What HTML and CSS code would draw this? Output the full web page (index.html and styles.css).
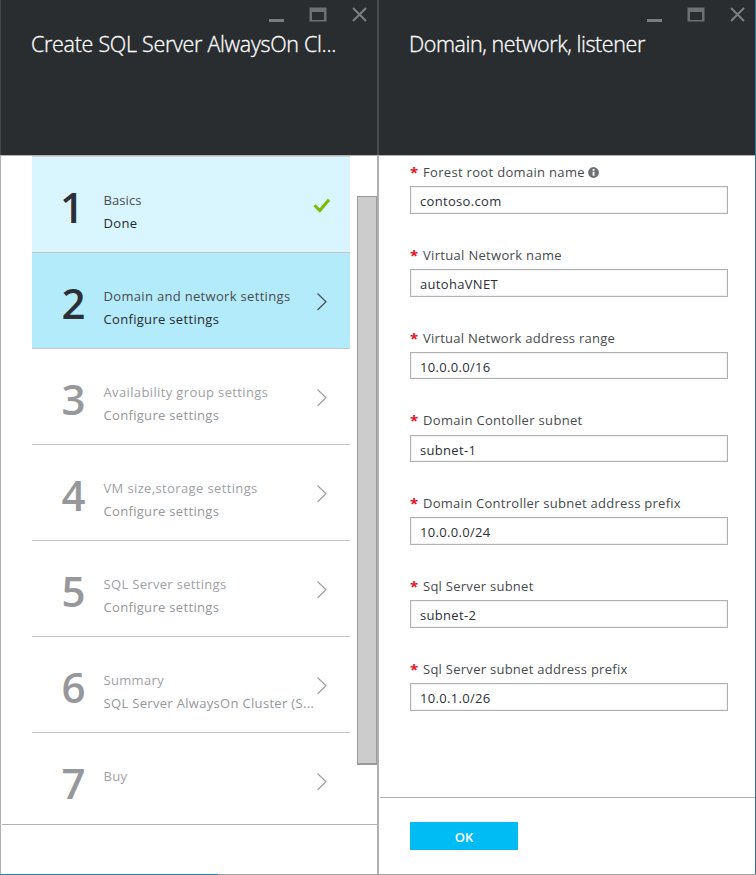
FILE: index.html
```html
<!DOCTYPE html>
<html lang="en">
<head>
<meta charset="utf-8">
<title>Create SQL Server AlwaysOn Cluster</title>
<link rel="stylesheet" href="styles.css">
</head>
<body>
<svg class="defs" width="0" height="0">
  <symbol id="controls" viewBox="0 0 100 16">
    <path d="M0 12h15v3H0z" fill="#7a7d80"/>
    <path d="M40.5 .5h17v14h-17z" fill="#6d7174"/>
    <path d="M43 5h12v8H43z" fill="#292d30"/>
    <path d="M84 1l13 13M97 1L84 14" stroke="#7d8083" stroke-width="2" fill="none"/>
  </symbol>
  <symbol id="chevron" viewBox="0 0 12 18">
    <path d="M1.5 .5L10 8.7 1.5 17" fill="none" stroke="currentColor" stroke-width="1.2"/>
  </symbol>
</svg>
<div class="portal">
  <section class="blade steps-blade">
    <header class="head">
      <svg class="controls"><use href="#controls"/></svg>
      <h1 class="t-create">Create SQL Server AlwaysOn Cl...</h1>
    </header>
    <div class="body">
      <ol class="steps">
        <li class="step done"><b>1</b><div class="text"><span class="t-basics">Basics</span><em>Done</em></div><svg class="check" viewBox="0 0 18 16"><path d="M1.5 7.2l5.3 5.3L16 1.7" fill="none" stroke="#7fba00" stroke-width="3"/></svg></li>
        <li class="step active"><b>2</b><div class="text"><span>Domain and network settings</span><em>Configure settings</em></div><svg class="chev"><use href="#chevron"/></svg></li>
        <li class="step"><b>3</b><div class="text"><span class="loose">Availability group settings</span><em>Configure settings</em></div><svg class="chev"><use href="#chevron"/></svg></li>
        <li class="step"><b>4</b><div class="text"><span class="loose">VM size,storage settings</span><em>Configure settings</em></div><svg class="chev"><use href="#chevron"/></svg></li>
        <li class="step"><b>5</b><div class="text"><span>SQL Server settings</span><em>Configure settings</em></div><svg class="chev"><use href="#chevron"/></svg></li>
        <li class="step"><b>6</b><div class="text"><span>Summary</span><em>SQL Server AlwaysOn Cluster (S...</em></div><svg class="chev"><use href="#chevron"/></svg></li>
        <li class="step"><b>7</b><div class="text"><span>Buy</span></div><svg class="chev"><use href="#chevron"/></svg></li>
      </ol>
      <div class="scrollbar"></div>
    </div>
    <footer class="foot"></footer>
    <div class="progress"></div>
  </section>
  <section class="blade form-blade">
    <header class="head">
      <svg class="controls"><use href="#controls"/></svg>
      <h1 class="t-domain">Domain, network, listener</h1>
    </header>
    <div class="body form">
      <div class="field"><label><i>*</i><span>Forest root domain name</span><svg class="info" viewBox="0 0 11 11"><circle cx="5.5" cy="5.5" r="5.4" fill="#6d7175"/><path d="M4.6 2h1.9v1.7H4.6zM4.6 4.7h1.9v4H4.6z" fill="#fff"/></svg></label><div class="input">contoso.com</div></div>
      <div class="field"><label><i>*</i><span>Virtual Network name</span></label><div class="input">autohaVNET</div></div>
      <div class="field"><label><i>*</i><span class="snug">Virtual Network address range</span></label><div class="input">10.0.0.0/16</div></div>
      <div class="field"><label><i>*</i><span>Domain Contoller subnet</span></label><div class="input">subnet-1</div></div>
      <div class="field"><label><i>*</i><span class="snug">Domain Controller subnet address prefix</span></label><div class="input">10.0.0.0/24</div></div>
      <div class="field"><label><i>*</i><span class="snug">Sql Server subnet</span></label><div class="input">subnet-2</div></div>
      <div class="field"><label><i>*</i><span class="snug">Sql Server subnet address prefix</span></label><div class="input">10.0.1.0/26</div></div>
    </div>
    <footer class="foot"><button>OK</button></footer>
    <div class="progress"></div>
  </section>
</div>
</body>
</html>
```
FILE: styles.css
```css
* { box-sizing: border-box; }
body { margin: 0; font: 13px/23px "Open Sans", "Noto Sans", sans-serif; color: #464a4d; letter-spacing: .32px; }
.defs { display: block; }
.portal { display: flex; width: 756px; height: 875px; background: #fff; overflow: hidden; }
.blade { display: flex; flex-direction: column; }
.steps-blade { width: 377px; background: linear-gradient(90deg, #b0b0b0 1px, #fff 1px); }
.form-blade { width: 379px; background: linear-gradient(90deg, #b0b0b0 2px, #fff 2px, #fff 378px, #2c7099 378px); }
.head { height: 155px; background: #292d30; border-left: 1px solid #43474a; flex: none; padding: 7px 8px 0 30px; }
.form-blade .head { border-left: 2px solid #484b4e; border-right: 1px solid #2c7fae; padding: 7px 8px 0 30px; }
.controls { display: block; width: 100px; height: 16px; margin-left: auto; }
h1 { margin: 4px 0 0; font-size: 21.5px; line-height: 34px; font-weight: 300; color: #fff; white-space: nowrap; -webkit-text-stroke: .3px #fff; }
.t-create { letter-spacing: -.3px; }
.t-domain { letter-spacing: -.42px; }
.body { flex: 1; min-height: 0; border-top: 1px solid #b0b0b0; border-left: 1px solid #b0b0b0; display: flex; }
.steps { list-style: none; margin: 0 0 0 31px; padding: 0; width: 318px; flex: none; }
.step { height: 96px; border-bottom: 1px solid #c4c6c7; display: flex; color: #a0a1a4; }
.step:first-child { height: 97px; border-top: 1px solid #ced6d9; }
.step:last-child { border: 0; }
.step b { width: 71.5px; padding-left: 29.5px; font-size: 42px; line-height: 99px; font-weight: 600; color: #97989c; flex: none; letter-spacing: 0; }
.done b { text-indent: -1.5px; }
.text { width: 211.5px; padding-top: 32px; display: flex; flex-direction: column; white-space: nowrap; }
.text em { font-style: normal; color: #95979a; }
.t-basics { letter-spacing: .1px; }
.loose { letter-spacing: .37px; }
.snug { letter-spacing: .27px; }
.done { background: #d9f5fe; }
.active { background: #b3ebfa; }
.done, .active { color: #484c50; }
.done b, .active b { color: #2c3036; }
.done em, .active em { color: #262a30; }
.chev { width: 12px; height: 18px; margin: 40px 0 0 1px; }
.check { width: 18px; height: 16px; margin: 41px 0 0 -2px; }
.scrollbar { width: 20px; height: 569px; margin: 40px 0 0 7px; background: #ccc; border: 1px solid #9a9a9a; border-bottom-width: 2px; flex: none; }
.foot { height: 50px; flex: none; border-top: 1px solid #b0b0b0; margin-left: 2px; }
.progress { height: 1px; background: linear-gradient(90deg, #2088b0 218px, #a0a0a0 218px); }
.form-blade .progress { background: #a0a0a0; }
.form-blade .foot { height: 77px; margin: 0 1px 0 3px; padding: 24px 0 0 30px; }
.form { border-left: 0; margin: 0 1px 0 2px; padding: 4px 0 0 31px; flex-direction: column; }
.field { height: 82.8px; flex: none; width: 318px; }
label { display: flex; height: 26.2px; line-height: 25.6px; }
label i { width: 13px; font-style: normal; font-weight: 700; font-size: 15px; color: #e81123; line-height: 24.6px; }
.info { width: 11px; height: 11px; margin: 7px 0 0 3.5px; }
.input { height: 27.6px; border: 1px solid #afb1b3; box-shadow: inset 0 0 0 1px #f1f1f1; padding-left: 9px; line-height: 29.5px; color: #2c3036; white-space: nowrap; }
button { display: block; width: 108px; height: 28px; border: 0; padding: 2px 0 0; background: #00bcf5; color: #fff; font: 600 13px/26px "Open Sans", sans-serif; }
```
